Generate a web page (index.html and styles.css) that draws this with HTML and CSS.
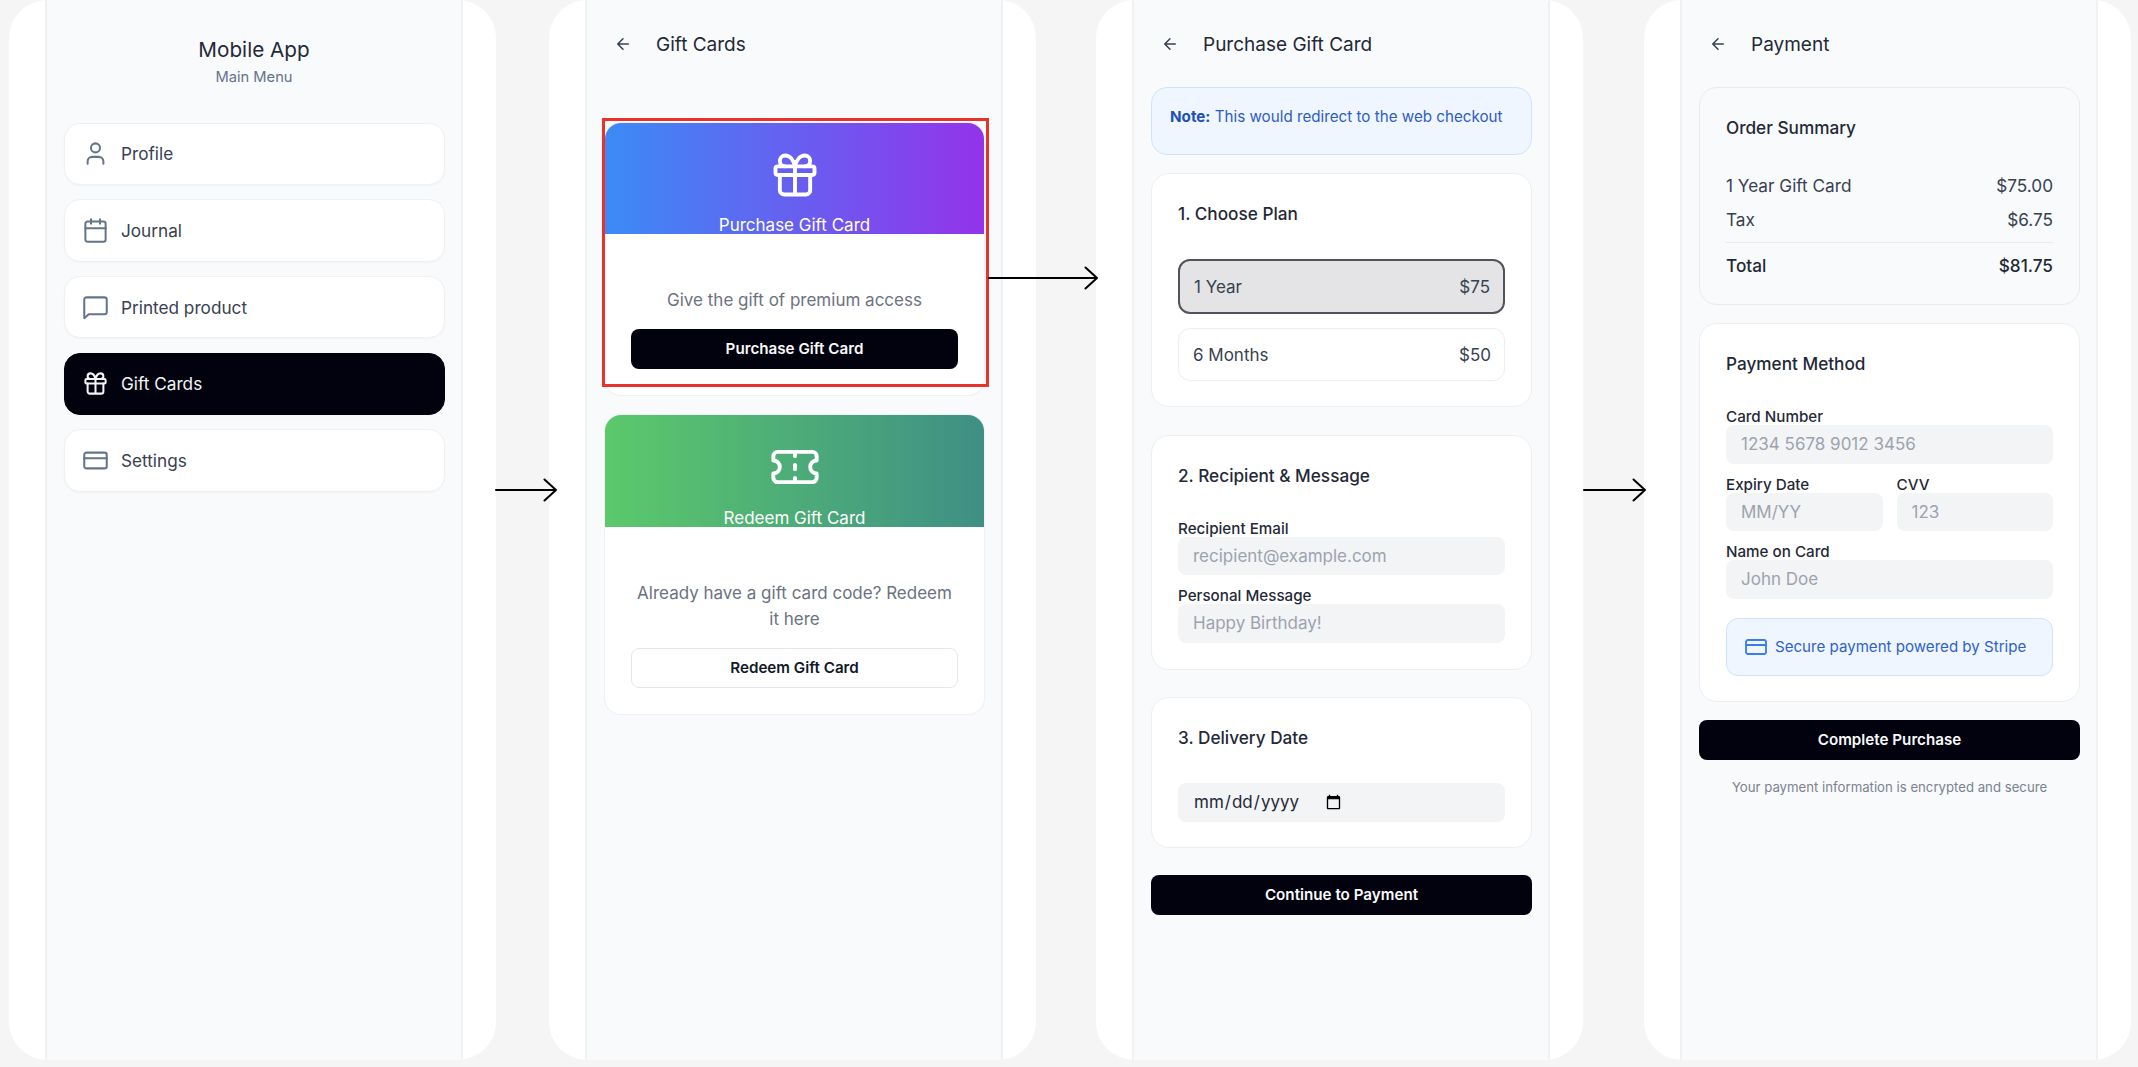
FILE: index.html
```html
<!DOCTYPE html>
<html lang="en">
<head>
    <meta charset="UTF-8">
    <meta name="viewport" content="width=device-width, initial-scale=1.0">
    <title>Gift Card Flow</title>
    <link rel="stylesheet" href="styles.css">
</head>
<body>
    <div class="board">
        <!-- Menu -->
        <section class="phone phone-menu">
            <div class="screen">
                <header class="menu-head">
                    <h1>Mobile App</h1>
                    <p>Main Menu</p>
                </header>
                <nav class="menu">
                    <a class="menu-item">
                        <svg class="menu-icon" viewBox="0 0 24 24"><path d="M19 21v-2a4 4 0 0 0-4-4H9a4 4 0 0 0-4 4v2"/><circle cx="12" cy="7" r="4"/></svg>
                        Profile
                    </a>
                    <a class="menu-item">
                        <svg class="menu-icon" viewBox="0 0 24 24"><path d="M8 2v4M16 2v4"/><rect x="3" y="4" width="18" height="18" rx="2"/><path d="M3 10h18"/></svg>
                        Journal
                    </a>
                    <a class="menu-item">
                        <svg class="menu-icon" viewBox="0 0 24 24"><path d="M22 16a2 2 0 0 1-2 2H6l-4 3.5V5a2 2 0 0 1 2-2h16a2 2 0 0 1 2 2z"/></svg>
                        Printed product
                    </a>
                    <a class="menu-item active">
                        <svg class="menu-icon" viewBox="0 0 24 24"><rect x="3" y="8" width="18" height="4" rx="1"/><path d="M12 8v13M19 12v7a2 2 0 0 1-2 2H7a2 2 0 0 1-2-2v-7M7.5 8a2.5 2.5 0 0 1 0-5A4.8 8 0 0 1 12 8a4.8 8 0 0 1 4.5-5 2.5 2.5 0 0 1 0 5"/></svg>
                        Gift Cards
                    </a>
                    <a class="menu-item">
                        <svg class="menu-icon" viewBox="0 0 24 24"><rect x="2" y="5" width="20" height="14" rx="2"/><path d="M2 10h20"/></svg>
                        Settings
                    </a>
                </nav>
            </div>
        </section>

        <!-- Gift cards -->
        <section class="phone phone-gift">
            <div class="screen">
                <header class="top-bar">
                    <svg class="back" viewBox="0 0 24 24"><path d="m12 19-7-7 7-7M19 12H5"/></svg>
                    <h2>Gift Cards</h2>
                </header>
                <div class="content content-gift">
                    <div class="highlight-wrap">
                        <article class="gift-card">
                            <div class="gift-banner banner-purple">
                                <svg class="banner-icon" viewBox="0 0 24 24"><rect x="3" y="8" width="18" height="4" rx="1"/><path d="M12 8v13M19 12v7a2 2 0 0 1-2 2H7a2 2 0 0 1-2-2v-7M7.5 8a2.5 2.5 0 0 1 0-5A4.8 8 0 0 1 12 8a4.8 8 0 0 1 4.5-5 2.5 2.5 0 0 1 0 5"/></svg>
                                <span>Purchase Gift Card</span>
                            </div>
                            <div class="gift-body">
                                <p>Give the gift of premium access</p>
                                <button class="btn btn-dark">Purchase Gift Card</button>
                            </div>
                        </article>
                        <div class="highlight"></div>
                    </div>
                    <article class="gift-card">
                        <div class="gift-banner banner-green">
                            <svg class="banner-icon" viewBox="0 0 24 24"><path d="M2 9a3 3 0 0 1 0 6v2a2 2 0 0 0 2 2h16a2 2 0 0 0 2-2v-2a3 3 0 0 1 0-6V7a2 2 0 0 0-2-2H4a2 2 0 0 0-2 2ZM12 5v2M12 17v2M12 11v2"/></svg>
                            <span>Redeem Gift Card</span>
                        </div>
                        <div class="gift-body">
                            <p>Already have a gift card code? Redeem it here</p>
                            <button class="btn btn-light">Redeem Gift Card</button>
                        </div>
                    </article>
                </div>
            </div>
        </section>

        <!-- Purchase -->
        <section class="phone phone-purchase">
            <div class="screen">
                <header class="top-bar">
                    <svg class="back" viewBox="0 0 24 24"><path d="m12 19-7-7 7-7M19 12H5"/></svg>
                    <h2>Purchase Gift Card</h2>
                </header>
                <div class="content content-purchase">
                    <div class="note"><strong>Note:</strong> This would redirect to the web checkout</div>
                    <div class="panel">
                        <h3>1. Choose Plan</h3>
                        <div class="plan selected"><span>1 Year</span><span>$75</span></div>
                        <div class="plan"><span>6 Months</span><span>$50</span></div>
                    </div>
                    <div class="panel">
                        <h3>2. Recipient &amp; Message</h3>
                        <label class="field">Recipient Email<input type="text" placeholder="recipient@example.com"></label>
                        <label class="field last">Personal Message<input type="text" placeholder="Happy Birthday!"></label>
                    </div>
                    <div class="panel">
                        <h3>3. Delivery Date</h3>
                        <div class="date-box"><input type="date"></div>
                    </div>
                    <button class="btn btn-dark">Continue to Payment</button>
                </div>
            </div>
        </section>

        <!-- Payment -->
        <section class="phone phone-payment">
            <div class="screen">
                <header class="top-bar">
                    <svg class="back" viewBox="0 0 24 24"><path d="m12 19-7-7 7-7M19 12H5"/></svg>
                    <h2>Payment</h2>
                </header>
                <div class="content">
                    <div class="panel panel-muted">
                        <h3>Order Summary</h3>
                        <div class="row"><span>1 Year Gift Card</span><span>$75.00</span></div>
                        <div class="row"><span>Tax</span><span>$6.75</span></div>
                        <div class="row total"><span>Total</span><span>$81.75</span></div>
                    </div>
                    <div class="panel">
                        <h3>Payment Method</h3>
                        <label class="field">Card Number<input type="text" placeholder="1234 5678 9012 3456"></label>
                        <div class="field-pair">
                            <label class="field">Expiry Date<input type="text" placeholder="MM/YY"></label>
                            <label class="field">CVV<input type="text" placeholder="123"></label>
                        </div>
                        <label class="field">Name on Card<input type="text" placeholder="John Doe"></label>
                        <div class="secure">
                            <svg viewBox="0 0 24 24"><rect x="2" y="5" width="20" height="14" rx="2"/><path d="M2 10h20"/></svg>
                            Secure payment powered by Stripe
                        </div>
                    </div>
                    <button class="btn btn-dark">Complete Purchase</button>
                    <p class="fine-print">Your payment information is encrypted and secure</p>
                </div>
            </div>
        </section>

        <!-- flow arrows drawn over the phones -->
        <svg class="arrows" viewBox="0 0 2138 1067">
            <path d="M496 490H556M544.500 479.500 556 490l-11.500 10.500"/>
            <path d="M989 278H1097M1085.500 267.500 1097 278l-11.500 10.500"/>
            <path d="M1584 490H1645M1633.500 479.500 1645 490l-11.500 10.500"/>
        </svg>
    </div>
</body>
</html>
```

FILE: styles.css
```css
* {
    box-sizing: border-box;
}

body {
    margin: 0;
    height: 1067px;
    overflow: hidden;
    background-color: #f5f5f5;
    font-family: Inter, 'Noto Sans', sans-serif;
    color: #1f2937;
}

svg {
    fill: none;
    stroke: currentColor;
    stroke-width: 2;
    stroke-linecap: round;
    stroke-linejoin: round;
    flex-shrink: 0;
}

h1, h2, h3, p {
    margin: 0;
}

.board {
    position: relative;
    display: flex;
    padding-left: 9px;
}

.phone {
    width: 487px;
    height: 1060px;
    padding: 0 33px 0 36px;
    background-color: #fff;
    border-radius: 38px;
    overflow: hidden;
}

.phone-menu {
    margin-right: 53px;
}

.phone-gift {
    margin-right: 60px;
}

.phone-purchase {
    margin-right: 61px;
}

.screen {
    height: 100%;
    background-color: #f9fafb;
    border-left: 2px solid #f0f1f3;
    border-right: 2px solid #f0f1f3;
}

/* menu */
.menu-head {
    padding-top: 36px;
    text-align: center;
}

.menu-head h1 {
    font-size: 20.700px;
    font-weight: 400;
    line-height: 28px;
}

.menu-head p {
    margin-top: 3px;
    font-size: 14.700px;
    line-height: 20px;
    color: #64748b;
}

.menu {
    display: flex;
    flex-direction: column;
    gap: 14.200px;
    padding: 35.500px 16px 0 17px;
}

.menu-item {
    display: flex;
    align-items: center;
    gap: 12px;
    height: 62.500px;
    padding-left: 17px;
    background-color: #fff;
    border: 1px solid #eef0f3;
    border-radius: 16px;
    box-shadow: 0 1px 2px rgba(0, 0, 0, 0.03);
    font-size: 17.200px;
    color: #374151;
}

.menu-icon {
    width: 27px;
    height: 27px;
    stroke-width: 1.800;
    color: #64748b;
}

.menu-item.active {
    background-color: #02020f;
    border-color: #02020f;
    color: #f3f4f6;
}

.menu-item.active .menu-icon {
    color: #f3f4f6;
}

/* top bar */
.top-bar {
    display: flex;
    align-items: center;
    gap: 24px;
    height: 87px;
    padding: 2px 0 0 27px;
}

.top-bar h2 {
    font-size: 19px;
    font-weight: 400;
}

.back {
    width: 18px;
    height: 18px;
    margin-top: -2px;
    color: #374151;
}

.content {
    display: flex;
    flex-direction: column;
    gap: 18px;
    padding: 0 16px 0 17px;
}

.content-gift {
    gap: 20px;
    padding: 36px 17px 0 18px;
}

.content-purchase {
    gap: 27.500px;
}

.content-purchase .note {
    margin-bottom: -9.500px;
}

/* gift cards */
.highlight-wrap {
    position: relative;
}

.highlight {
    position: absolute;
    top: -5px;
    left: -3px;
    right: -5px;
    bottom: 8px;
    border: 3px solid #e8322a;
}

.gift-card {
    background-color: #fff;
    border-radius: 16px;
    box-shadow: 0 0 0 1px #eef0f3;
    overflow: hidden;
}

.gift-banner {
    display: flex;
    flex-direction: column;
    align-items: center;
    height: 111px;
    padding-top: 26px;
    color: #fff;
    font-size: 17px;
}

.gift-banner span {
    margin-top: 15px;
    line-height: 18px;
}

.banner-icon {
    width: 52px;
    height: 52px;
    stroke-width: 1.800;
}

.banner-purple {
    background: linear-gradient(90deg, #3b8bf6, #9333ea);
}

.banner-green {
    height: 112px;
    background: linear-gradient(90deg, #5bc96b, #3f8f85);
}

.banner-green span {
    margin-top: 16px;
}

.gift-body {
    padding: 53px 26px 26px;
    text-align: center;
}

.gift-body p {
    margin-bottom: 16px;
    font-size: 17px;
    line-height: 26px;
    color: #6b7280;
}

/* buttons */
.btn {
    display: block;
    width: 100%;
    height: 40px;
    padding-bottom: 2px;
    border-radius: 8px;
    font-family: inherit;
    font-size: 15.200px;
    font-weight: 600;
    cursor: pointer;
}

.btn-dark {
    background-color: #02020f;
    border: none;
    color: #f9fafb;
}

.btn-light {
    background-color: #fff;
    border: 1px solid #e5e7eb;
    color: #111827;
}

/* purchase */
.note {
    height: 68px;
    padding: 17px 17px 0 18px;
    background-color: #eff6ff;
    border: 1px solid #cfe3fd;
    border-radius: 16px;
    font-size: 15.200px;
    line-height: 24px;
    color: #2f5cc4;
}

.note strong {
    font-weight: 700;
    color: #1e4fb8;
}

.panel {
    padding: 25px 26px;
    background-color: #fff;
    border: 1px solid #eceef1;
    border-radius: 18px;
}

.panel-muted {
    padding-bottom: 26px;
    background-color: #f9fafb;
    border-color: #e8eaed;
}

.panel h3 {
    margin-bottom: 30px;
    font-size: 17.200px;
    font-weight: 500;
    line-height: 30px;
    color: #1f2937;
}

.panel-muted h3 {
    margin-bottom: 31px;
}

.panel h3 + .field {
    margin-top: -1px;
}

.plan {
    display: flex;
    justify-content: space-between;
    align-items: center;
    height: 53px;
    padding: 0 13px 0 14px;
    border: 1px solid #eceef1;
    border-radius: 12px;
    font-size: 17px;
    color: #374151;
}

.plan.selected {
    height: 55px;
    margin-bottom: 14px;
    background-color: #e4e4e7;
    border: 2px solid #52525b;
}

.field {
    display: block;
    margin-bottom: 12px;
    font-size: 15.200px;
    font-weight: 500;
    line-height: 17px;
    color: #1f2937;
}

.field.last {
    margin-bottom: 1px;
}

.field input {
    display: block;
    width: 100%;
    height: 38.500px;
    padding: 0 15px;
    background-color: #f3f4f6;
    border: none;
    border-radius: 8px;
    font-family: inherit;
    font-size: 17px;
}

.field input::placeholder {
    color: #9ca3af;
}

.field-pair {
    display: grid;
    grid-template-columns: 1fr 1fr;
    gap: 14px;
}

.date-box {
    height: 38.500px;
    padding-left: 15px;
    background-color: #f3f4f6;
    border-radius: 8px;
}

.date-box input {
    height: 100%;
    padding: 0;
    background: none;
    border: none;
    font-family: inherit;
    font-size: 17px;
    color: #1f2937;
}

/* payment */
.row {
    display: flex;
    justify-content: space-between;
    margin-bottom: 10px;
    font-size: 17.200px;
    line-height: 24px;
    color: #374151;
}

.row.total {
    margin-bottom: 0;
    padding-top: 11px;
    border-top: 1px solid #e8eaed;
    font-weight: 500;
    color: #1f2937;
}

.secure {
    display: flex;
    align-items: center;
    gap: 7px;
    height: 58px;
    margin-top: 19px;
    padding-left: 17px;
    background-color: #eff6ff;
    border: 1px solid #cfe3fd;
    border-radius: 12px;
    font-size: 15.100px;
    color: #2f62c9;
}

.secure svg {
    width: 24px;
    height: 24px;
    stroke-width: 1.800;
    color: #3b7bf0;
}

.fine-print {
    margin-top: -1px;
    font-size: 13.200px;
    line-height: 20px;
    text-align: center;
    color: #7b8290;
}

/* flow arrows */
.arrows {
    position: absolute;
    top: 0;
    left: 0;
    width: 2138px;
    height: 1067px;
    color: #000;
    stroke-width: 2;
    pointer-events: none;
}
```
